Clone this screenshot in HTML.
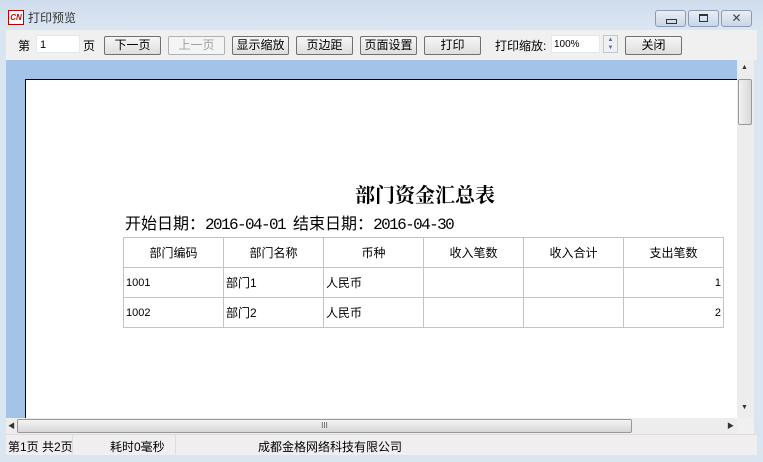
<!DOCTYPE html><html><head><meta charset="utf-8"><style>
body{margin:0;width:763px;height:462px;overflow:hidden;background:#dae5f2;font-family:"Liberation Sans","Noto Sans CJK SC",sans-serif;font-size:12px;position:relative}
.a{position:absolute}
.btn{position:absolute;top:36px;height:17px;width:55px;border:1px solid #707070;border-radius:2px;background:linear-gradient(#f6f6f6,#dedede);text-align:center;line-height:17px;font-size:12px;color:#000}
.dis{color:#a0a0a0;border-color:#adb2b5;background:#f4f4f4}
td{border:1px solid #a8c8ee;height:29px;padding:0 2px;font-size:11px;}
table{border-collapse:collapse;position:absolute;left:123px;top:237px;width:601px;table-layout:fixed}
</style></head><body>
<div class="a" style="left:0;top:0;width:763px;height:30px;background:linear-gradient(#cfdcec,#dbe6f3)"></div>
<div class="a" style="left:8px;top:10px;width:14px;height:13px;border:1px solid #b00;background:#fff;color:#c00;font-size:8px;font-weight:bold;font-style:italic;line-height:13px;text-align:center">CN</div>
<div class="a" style="left:28px;top:9px;color:#333;font-size:12px">打印预览</div>
<div class="a" style="left:655px;top:10px;width:29px;height:15px;border:1px solid #8a9bb3;border-radius:3px;background:linear-gradient(#e8eef6,#c9d6e6)"><div class="a" style="left:10px;top:8px;width:9px;height:3px;border:1px solid #333;"></div></div>
<div class="a" style="left:688px;top:10px;width:29px;height:15px;border:1px solid #8a9bb3;border-radius:3px;background:linear-gradient(#e8eef6,#c9d6e6)"><div class="a" style="left:10px;top:3px;width:7px;height:5px;border:1px solid #333;border-top-width:2px"></div></div>
<div class="a" style="left:721px;top:10px;width:29px;height:15px;border:1px solid #8a9bb3;border-radius:3px;background:linear-gradient(#e8eef6,#c9d6e6);text-align:center;line-height:15px;font-size:12px;color:#444">✕</div>
<div class="a" style="left:6px;top:30px;width:751px;height:30px;background:#f0f0f0"></div>
<div class="a" style="left:18px;top:37px">第</div>
<div class="a" style="left:36px;top:35px;width:44px;height:18px;background:#fff;border:1px solid #e3e9ef;font-size:11px;line-height:18px;padding-left:3px;box-sizing:border-box">1</div>
<div class="a" style="left:83px;top:37px">页</div>
<div class="btn" style="left:104px">下一页</div>
<div class="btn dis" style="left:168px">上一页</div>
<div class="btn" style="left:232px">显示缩放</div>
<div class="btn" style="left:296px">页边距</div>
<div class="btn" style="left:360px">页面设置</div>
<div class="btn" style="left:424px">打印</div>
<div class="a" style="left:495px;top:37px">打印缩放:</div>
<div class="a" style="left:551px;top:35px;width:49px;height:18px;background:#fff;border:1px solid #e3e9ef;font-size:10px;line-height:17px;padding-left:2px;box-sizing:border-box">100%</div>
<div class="a" style="left:603px;top:35px;width:15px;height:18px;border:1px solid #c0c8d0;background:#f0f0f0;font-size:6px;line-height:8px;text-align:center;color:#4a6fa5;box-sizing:border-box">▲<br>▼</div>
<div class="btn" style="left:625px">关闭</div>
<div class="a" style="left:6px;top:60px;width:731px;height:358px;background:#a3c3e8"></div>
<div class="a" style="left:25px;top:79px;width:712px;height:339px;background:#fff;border-top:1px solid #000;border-left:1px solid #000;box-sizing:border-box"></div>
<div class="a" style="left:737px;top:60px;width:17px;height:358px;background:#ededed"></div>
<div class="a" style="left:741px;top:64px;font-size:7px;color:#333">▲</div>
<div class="a" style="left:738px;top:79px;width:14px;height:46px;border:1px solid #999;border-radius:2px;background:linear-gradient(90deg,#f2f2f2,#d8d8d8);box-sizing:border-box"></div>
<div class="a" style="left:741px;top:404px;font-size:7px;color:#333">▼</div>
<div class="a" style="left:6px;top:418px;width:731px;height:16px;background:#ededed"></div>
<div class="a" style="left:8px;top:421px;font-size:7px;color:#333">◀</div>
<div class="a" style="left:17px;top:419px;width:615px;height:14px;border:1px solid #999;border-radius:2px;background:linear-gradient(#f4f4f4,#d6d6d6);box-sizing:border-box;text-align:center;font-size:8px;line-height:12px;color:#555">III</div>
<div class="a" style="left:727px;top:421px;font-size:7px;color:#333">▶</div>
<div class="a" style="left:737px;top:418px;width:17px;height:16px;background:#f0f0f0"></div>
<div class="a" style="left:6px;top:434px;width:751px;height:21px;background:#f0eeee;border-top:1px solid #ddd;box-sizing:border-box"></div>
<div class="a" style="left:8px;top:438px">第1页 共2页</div>
<div class="a" style="left:72px;top:435px;height:19px;border-left:1px solid #ddd"></div>
<div class="a" style="left:110px;top:438px">耗时0毫秒</div>
<div class="a" style="left:175px;top:435px;height:19px;border-left:1px solid #ddd"></div>
<div class="a" style="left:258px;top:438px">成都金格网络科技有限公司</div>
<div class="a" style="left:255px;top:179px;width:340px;text-align:center;font-family:'Noto Serif CJK SC',serif;font-weight:bold;font-size:20px">部门资金汇总表</div>
<div class="a" style="left:125px;top:210px;font-family:'Liberation Mono','Noto Sans CJK SC',monospace;font-size:16px;white-space:nowrap">开始日期：<span style="letter-spacing:-1.6px">2016-04-01 </span>结束日期：<span style="letter-spacing:-1.6px">2016-04-30</span></div>
<table><tr style="text-align:center"><td style="font-size:12px">部门编码</td><td style="font-size:12px">部门名称</td><td style="font-size:12px">币种</td><td style="font-size:12px">收入笔数</td><td style="font-size:12px">收入合计</td><td style="font-size:12px">支出笔数</td></tr>
<tr><td>1001</td><td style="font-size:12px">部门1</td><td style="font-size:12px">人民币</td><td></td><td></td><td style="text-align:right">1</td></tr>
<tr><td>1002</td><td style="font-size:12px">部门2</td><td style="font-size:12px">人民币</td><td></td><td></td><td style="text-align:right">2</td></tr></table>
</body></html>
